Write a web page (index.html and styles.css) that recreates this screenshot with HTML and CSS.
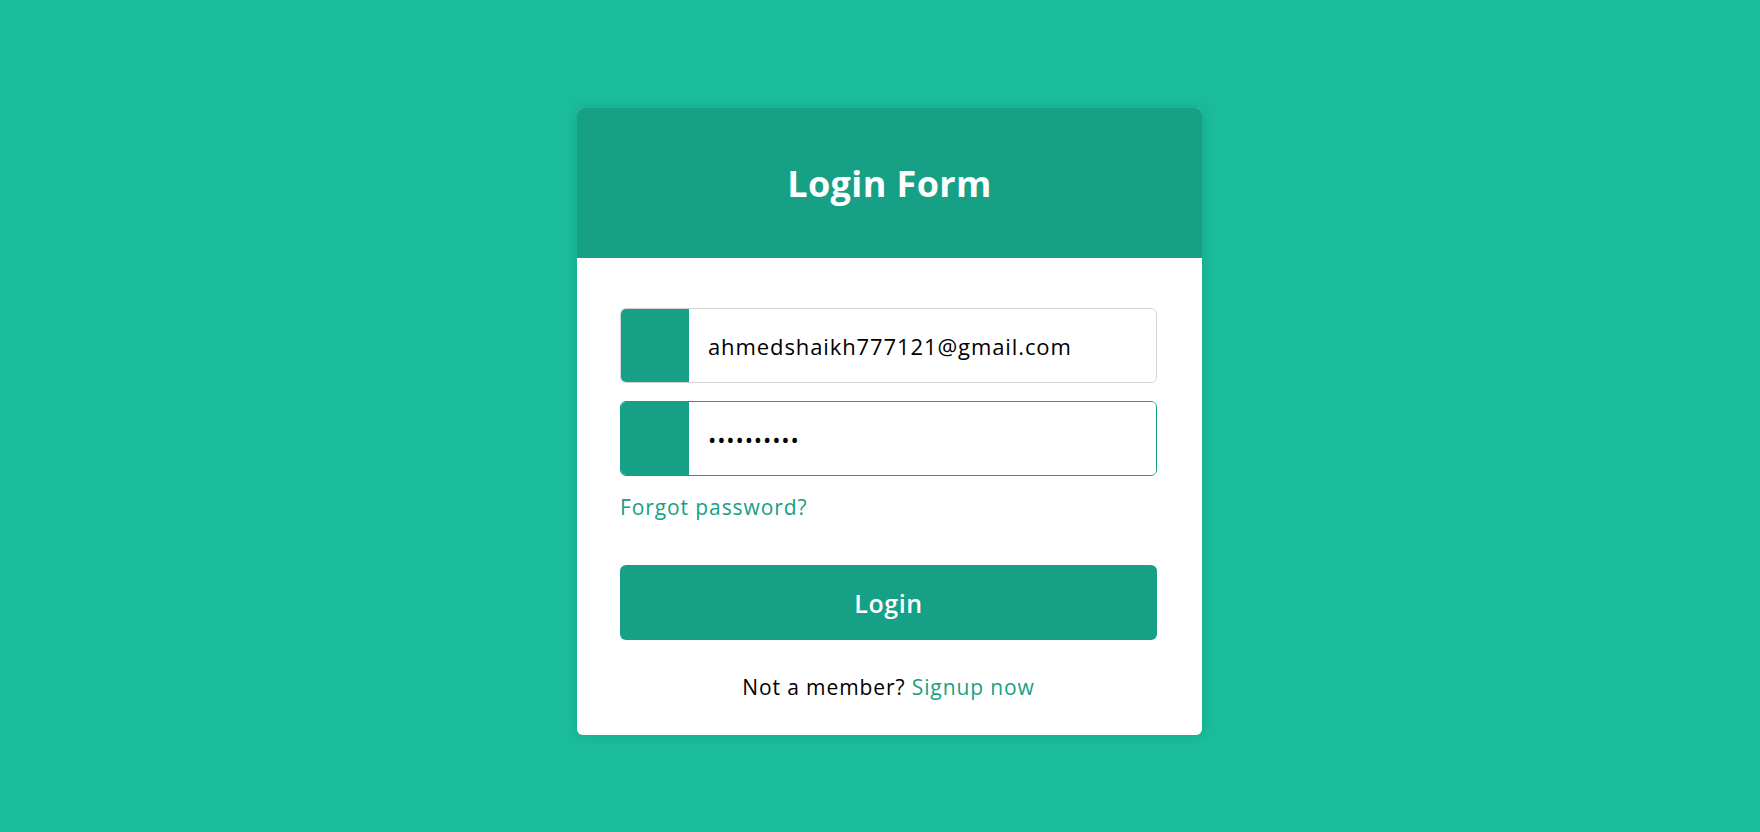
FILE: index.html
```html
<!DOCTYPE html>
<html lang="en">
<head>
<meta charset="utf-8">
<title>Login Form</title>
<link rel="stylesheet" href="styles.css">
</head>
<body>
  <div class="wrapper">
    <div class="title">Login Form</div>
    <form class="form" onsubmit="return false">
      <div class="field">
        <span class="icon"></span>
        <input type="text" value="ahmedshaikh777121@gmail.com">
      </div>
      <div class="field focused">
        <span class="icon"></span>
        <input type="password" value="abcdefghij">
      </div>
      <div class="pass-link"><a href="#">Forgot password?</a></div>
      <button class="btn" type="submit">Login</button>
      <div class="signup-link">Not a member? <a href="#">Signup now</a></div>
    </form>
  </div>
</body>
</html>
```

FILE: styles.css
```css
* {
  margin: 0;
  padding: 0;
  box-sizing: border-box;
}
html, body {
  height: 100%;
}
body {
  background: #1abc9c;
  font-family: "Open Sans", "Noto Sans", sans-serif;
  display: flex;
  justify-content: center;
  align-items: flex-start;
  padding-top: 108px;
  padding-left: 19px;
}
.wrapper {
  width: 625px;
  background: #fff;
  border-radius: 6px;
  overflow: hidden;
  box-shadow: 0 0 12px rgba(0, 0, 0, 0.12);
}
.title {
  height: 150px;
  background: #16a085;
  color: #fff;
  font-size: 36px;
  font-weight: 700;
  letter-spacing: 0.4px;
  display: flex;
  align-items: center;
  justify-content: center;
}
.form {
  padding: 50px 45px 34px 43px;
  display: flex;
  flex-direction: column;
}
.field {
  display: flex;
  height: 75px;
  border: 1px solid #d3d3d3;
  border-radius: 6px;
  overflow: hidden;
  margin-bottom: 18px;
}
.field.focused {
  border-color: #16a085;
}
.icon {
  width: 69px;
  flex: none;
  background: #16a085;
  margin: -1px 0 -1px -1px;
}
.field input {
  flex: 1;
  min-width: 0;
  border: none;
  outline: none;
  padding-left: 19px;
  font-family: "Open Sans", "Noto Sans", sans-serif;
  font-size: 22px;
  letter-spacing: 0.9px;
  color: #000;
  background: #fff;
}
.pass-link {
  font-size: 21px;
  letter-spacing: 0.9px;
  line-height: 28px;
  margin-top: -1px;
}
.pass-link a,
.signup-link a {
  color: #16a085;
  text-decoration: none;
}
.btn {
  margin-top: 44px;
  height: 75px;
  border: none;
  border-radius: 6px;
  background: #16a085;
  color: #fff;
  font-family: "Open Sans", "Noto Sans", sans-serif;
  font-size: 25px;
  font-weight: 600;
  letter-spacing: 0.6px;
}
.signup-link {
  margin-top: 33px;
  text-align: center;
  font-size: 21px;
  letter-spacing: 0.9px;
  line-height: 28px;
  color: #000;
}
```
